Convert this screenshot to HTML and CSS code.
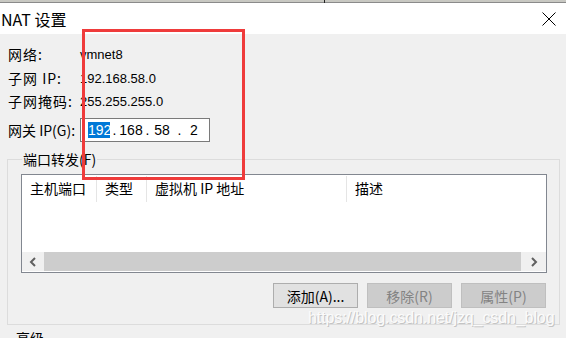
FILE: index.html
```html
<!DOCTYPE html>
<html lang="zh-CN">
<head>
    <meta charset="UTF-8">
    <title>NAT 设置</title>
    <link rel="stylesheet" href="styles.css">
</head>
<body>
    <div class="top-strip"><span class="tick"></span></div>

    <div class="title-bar">
        <span class="title">NAT 设置</span>
        <svg class="close" width="14" height="14" viewBox="0 0 14 14">
            <path d="M0.5 0.5 L13.5 13.5 M13.5 0.5 L0.5 13.5" stroke="#000" stroke-width="1" fill="none"/>
        </svg>
    </div>

    <div class="dialog">
        <div class="info">
            <div class="row r1"><span class="label">网络:</span><span class="value">vmnet8</span></div>
            <div class="row r2"><span class="label">子网 IP:</span><span class="value">192.168.58.0</span></div>
            <div class="row r3"><span class="label">子网掩码:</span><span class="value">255.255.255.0</span></div>
            <div class="row r4">
                <span class="label">网关 IP(G):</span>
                <div class="ip-box">
                    <span class="seg sel">192</span><span class="dot">.</span>
                    <span class="seg">168</span><span class="dot">.</span>
                    <span class="seg">58</span><span class="dot">.</span>
                    <span class="seg">2</span>
                </div>
            </div>
        </div>

        <fieldset class="group">
            <legend>端口转发(F)</legend>
            <div class="list">
                <div class="list-head">
                    <div class="col c1">主机端口</div>
                    <div class="col c2">类型</div>
                    <div class="col c3">虚拟机 IP 地址</div>
                    <div class="col c4">描述</div>
                </div>
                <div class="list-body"></div>
                <div class="hscroll">
                    <div class="arrow">
                        <svg width="8" height="10" viewBox="0 0 8 10"><path d="M6 1 L2 5 L6 9" stroke="#606060" stroke-width="2" fill="none"/></svg>
                    </div>
                    <div class="thumb"></div>
                    <div class="arrow right">
                        <svg width="8" height="10" viewBox="0 0 8 10"><path d="M2 1 L6 5 L2 9" stroke="#606060" stroke-width="2" fill="none"/></svg>
                    </div>
                </div>
            </div>
            <div class="buttons">
                <button class="btn">添加(A)...</button>
                <button class="btn" disabled>移除(R)</button>
                <button class="btn" disabled>属性(P)</button>
            </div>
        </fieldset>

        <div class="next-group">高级</div>
    </div>

    <!-- cadre rouge d'annotation + filigrane -->
    <div class="highlight"></div>
    <div class="watermark">https://blog.csdn.net/jzq_csdn_blog</div>
</body>
</html>
```

FILE: styles.css
```css
body {
    margin: 0;
    width: 566px;
    height: 338px;
    overflow: hidden;
    position: relative;
    background-color: #f0f0f0;
    font-family: "Noto Sans CJK SC", "Liberation Sans", sans-serif;
    font-size: 14px;
    color: #000;
}

.top-strip {
    height: 2px;
    background-color: #c8c8c2;
    border-bottom: 1px solid #8a8a8a;
    position: relative;
}

.tick {
    position: absolute;
    left: 324px;
    top: 0;
    width: 1px;
    height: 3px;
    background-color: #222;
}

.title-bar {
    height: 31px;
    background-color: #fff;
    display: flex;
    align-items: center;
    justify-content: space-between;
    padding: 0 10px 0 1px;
}

.title {
    font-size: 16px;
    line-height: 20px;
}

.close {
    display: block;
}

.dialog {
    padding: 8px 0 0 8px;
}

.info .row {
    display: flex;
    align-items: center;
}

.r1, .r2 { height: 24px; }
.r3 { height: 22px; margin-bottom: 6px; }
.r4 { height: 24px; }

.label {
    flex: none;
    width: 72px;
    font-size: 14px;
    letter-spacing: 1px;
    white-space: nowrap;
}

.r4 .label {
    letter-spacing: 0;
}

.value {
    font-family: "Liberation Sans", sans-serif;
    font-size: 13px;
}

.ip-box {
    flex: none;
    width: 121px;
    height: 22px;
    background-color: #fff;
    border: 1px solid #7a7a7a;
    display: flex;
    align-items: center;
    padding-left: 7px;
    font-family: "Liberation Sans", sans-serif;
    font-size: 14px;
}

.seg {
    display: inline-block;
    text-align: center;
    line-height: 16px;
}

.seg.sel {
    background-color: #0078d7;
    color: #fff;
    width: 22px;
}

.dot {
    display: inline-block;
    width: 9px;
    text-align: center;
}

.seg:nth-child(3) { width: 24px; }
.seg:nth-child(5) { width: 20px; }
.seg:nth-child(7) { width: 14px; }
.dot:nth-child(6) { width: 15px; }

.group {
    margin: 9px 0 0 -1px;
    width: 553px;
    height: 174px;
    border: 1px solid #dcdcdc;
    padding: 0 0 0 13px;
    box-sizing: border-box;
}

.group legend {
    padding: 0 1px;
    margin-left: 1px;
    font-size: 14px;
    line-height: 16px;
}

.list {
    margin-top: 7px;
    width: 526px;
    height: 99px;
    border: 1px solid #828790;
    background-color: #fff;
    box-sizing: border-box;
    display: flex;
    flex-direction: column;
}

.list-head {
    display: flex;
    height: 26px;
    padding-top: 1px;
}

.col {
    padding-left: 8px;
    line-height: 25px;
    font-size: 14px;
    border-right: 1px solid #e5e5e5;
    box-sizing: border-box;
}

.c1 { width: 75px; }
.c2 { width: 50px; }
.c3 { width: 200px; }
.c4 { flex: 1; border-right: none; }

.list-body {
    flex: 1;
}

.hscroll {
    height: 19px;
    display: flex;
    margin-bottom: 1px;
}

.arrow {
    width: 22px;
    background-color: #f0f0f0;
    display: flex;
    align-items: center;
    justify-content: center;
}

.arrow.right {
    width: 25px;
}

.thumb {
    flex: 1;
    background-color: #cdcdcd;
}

.buttons {
    display: flex;
    justify-content: flex-end;
    gap: 9px;
    margin: 10px 0 0 0;
    padding-right: 13px;
}

.btn {
    width: 85px;
    height: 25px;
    font-family: "Noto Sans CJK SC", "Liberation Sans", sans-serif;
    font-size: 14px;
    background-color: #e1e1e1;
    border: 1px solid #adadad;
    color: #000;
    padding: 0;
}

.btn:disabled {
    background-color: #cccccc;
    border-color: #bfbfbf;
    color: #838383;
}

.next-group {
    margin: 5px 0 0 8px;
    font-size: 14px;
    line-height: 16px;
}

.highlight {
    position: absolute;
    left: 82px;
    top: 29px;
    width: 157px;
    height: 145px;
    border: 3px solid #ef3b3b;
}

.watermark {
    position: absolute;
    left: 308px;
    top: 309px;
    font-family: "Liberation Sans", sans-serif;
    font-size: 16px;
    letter-spacing: -0.1px;
    color: #fbfbfb;
    text-shadow: 1px 1px 0 #c4c4c4;
}
```
